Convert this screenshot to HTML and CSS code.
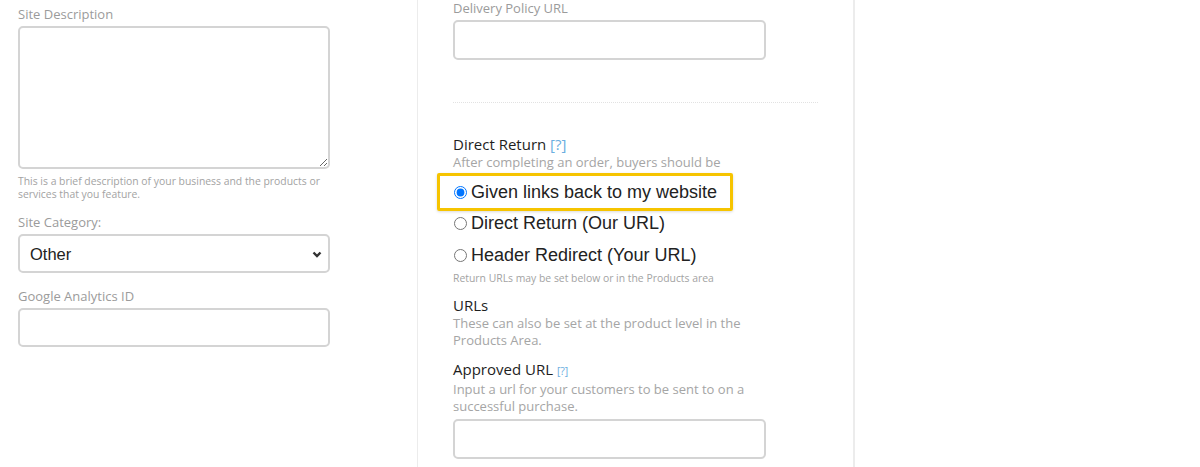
FILE: index.html
```html
<!DOCTYPE html>
<html lang="en">
<head>
  <meta charset="UTF-8" />
  <meta name="viewport" content="width=device-width, initial-scale=1.0" />
  <title>Store Settings</title>
  <link rel="stylesheet" href="styles.css">
</head>
<body>
  <div class="settings">
    <div class="col col-site">
      <label class="field-label" for="site-desc">Site Description</label>
      <textarea id="site-desc" class="field field-area"></textarea>
      <p class="help-small">This is a brief description of your business and the products or services that you feature.</p>

      <label class="field-label cat-label" for="site-cat">Site Category:</label>
      <div class="select-wrap">
        <select id="site-cat" class="field field-select">
          <option>Other</option>
        </select>
        <svg class="chevron" width="10" height="7" viewBox="0 0 10 7"><path d="M1.5 1.5 L5 5 L8.5 1.5" fill="none" stroke="#333" stroke-width="2.4"/></svg>
      </div>

      <label class="field-label ga-label" for="ga-id">Google Analytics ID</label>
      <input id="ga-id" class="field" type="text">
    </div>

    <div class="col col-return">
      <label class="field-label delivery-label" for="delivery-url">Delivery Policy URL</label>
      <input id="delivery-url" class="field wide" type="text">

      <hr class="divider">

      <h4 class="group-title direct">Direct Return <a class="help-link" href="#">[?]</a></h4>
      <p class="group-desc">After completing an order, buyers should be</p>

      <div class="choices">
        <label class="choice highlighted"><input type="radio" name="ret" checked> Given links back to my website</label>
        <label class="choice"><input type="radio" name="ret"> Direct Return (Our URL)</label>
        <label class="choice"><input type="radio" name="ret"> Header Redirect (Your URL)</label>
      </div>
      <p class="help-small return-note">Return URLs may be set below or in the Products area</p>

      <h4 class="group-title urls">URLs</h4>
      <p class="group-desc">These can also be set at the product level in the Products Area.</p>

      <h4 class="group-title approved">Approved URL <a class="help-link tiny" href="#">[?]</a></h4>
      <p class="group-desc">Input a url for your customers to be sent to on a successful purchase.</p>
      <input class="field wide approved-input" type="text">
    </div>

    <div class="col col-empty"></div>
  </div>
</body>
</html>
```

FILE: styles.css
```css
body {
  margin: 0;
  background: #fff;
  font-family: 'Open Sans', 'Liberation Sans', sans-serif;
  color: #222;
  overflow: hidden;
}
.settings {
  display: flex;
  height: 467px;
}
.col-site {
  width: 399px;
  padding: 6px 0 0 18px;
}
.col-return {
  width: 365px;
  padding: 0 35px;
  border-left: 1px solid #ececec;
  border-right: 2px solid #ececec;
}
.col-empty {
  flex: 1;
}

/* labels and fields */
.field-label {
  display: block;
  font-size: 13px;
  line-height: 16px;
  color: #9b9b9b;
  margin-bottom: 4px;
}
.cat-label {
  margin-top: 13px;
}
.ga-label {
  margin-top: 15px;
}
.field {
  display: block;
  box-sizing: border-box;
  width: 312px;
  height: 39px;
  border: 2px solid #d4d4d4;
  border-radius: 5px;
  background: #fff;
  font-family: 'Liberation Sans', Arial, sans-serif;
  font-size: 17px;
  padding: 0 10px;
  margin: 0;
  outline: none;
}
.field.wide {
  width: 313px;
  height: 40px;
}
.field-area {
  height: 143px;
  resize: vertical;
}
.select-wrap {
  position: relative;
  width: 312px;
}
.field-select {
  appearance: none;
  -webkit-appearance: none;
  color: #222;
  font-size: 16.5px;
}
.chevron {
  position: absolute;
  right: 8px;
  top: 17px;
}
.help-small {
  margin: 6px 0 0;
  font-size: 10.4px;
  line-height: 13px;
  color: #a3a3a3;
  width: 312px;
}

/* return options */
.divider {
  border: none;
  border-top: 1px dotted #e2e2e2;
  width: 365px;
  margin: 42px 0 0;
}
.group-title {
  margin: 0;
  font-weight: normal;
  font-size: 15px;
  line-height: 20px;
  color: #1e1e1e;
}
.direct {
  margin-top: 31px;
}
.help-link {
  color: #6aaee0;
  text-decoration: none;
}
.help-link.tiny {
  font-size: 10.5px;
}
.group-desc {
  margin: 0;
  font-size: 13px;
  line-height: 17px;
  color: #a5a5a5;
  width: 305px;
}
.choices {
  display: flex;
  flex-direction: column;
  gap: 8px;
  margin: 2px 0 0 -16px;
}
.choice {
  display: flex;
  align-items: center;
  gap: 4px;
  height: 24px;
  padding-left: 16px;
  font-family: 'Liberation Sans', Arial, sans-serif;
  font-size: 18px;
  color: #222;
  box-sizing: border-box;
}
.choice input {
  margin: 0 0 0 1px;
  width: 13px;
  height: 13px;
}
.choice.highlighted {
  width: 296px;
  height: 38px;
  margin-bottom: -8px;
  border: 3px solid #f6c400;
  border-radius: 2px;
  padding-left: 13px;
  box-shadow: 0 1px 3px rgba(0, 0, 0, 0.15);
}
.return-note {
  margin-top: 5px;
}
.urls {
  margin-top: 10px;
}
.approved {
  margin-top: 10px;
}
.approved-input {
  margin-top: 4px;
  height: 39px;
}
```
